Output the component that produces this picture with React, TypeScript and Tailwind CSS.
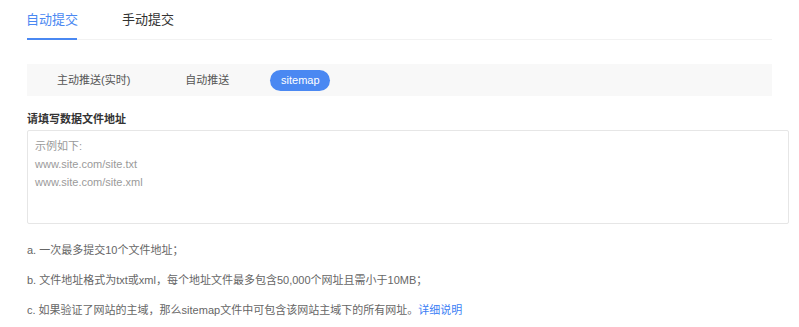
import { useState } from "react";

const FONT = "font-['Liberation_Sans','Noto_Sans_CJK_SC',sans-serif]";

const SUB_TABS = [
  { id: "push", label: "主动推送(实时)", gap: "ml-[30px]" },
  { id: "auto", label: "自动推送", gap: "ml-[55px]" },
  { id: "sitemap", label: "sitemap", gap: "ml-[41px]" },
];

export default function App() {
  const [tab, setTab] = useState("auto-submit");
  const [sub, setSub] = useState("sitemap");

  return (
    <div className={`h-[327px] w-[799px] overflow-hidden bg-white pl-[27px] ${FONT}`}>
      {/* top tabs */}
      <div className="flex h-[40px] w-[745px] items-stretch gap-[46px] border-b border-[#f2f2f2]">
        {[
          { id: "auto-submit", label: "自动提交" },
          { id: "manual-submit", label: "手动提交" },
        ].map((t) => (
          <button
            key={t.id}
            type="button"
            onClick={() => setTab(t.id)}
            className={`-mb-px flex w-[50px] items-start justify-center whitespace-nowrap border-b-2 pt-[11px] text-[13px] leading-[18px] ${
              tab === t.id ? "border-[#4a88f2] text-[#4a88f2]" : "border-transparent text-[#333]"
            }`}
          >
            {t.label}
          </button>
        ))}
      </div>

      {/* sub tabs */}
      <div className="mt-[24px] flex h-[32px] w-[745px] items-center bg-[#f8f8f8]">
        {SUB_TABS.map((s) =>
          s.id === sub ? (
            <button
              key={s.id}
              type="button"
              onClick={() => setSub(s.id)}
              className={`${s.gap} flex h-[21px] w-[60px] items-center justify-center rounded-full bg-[#4a88f2] text-[11px] text-white`}
            >
              {s.label}
            </button>
          ) : (
            <button
              key={s.id}
              type="button"
              onClick={() => setSub(s.id)}
              className={`${s.gap} text-[11px] text-[#555]`}
            >
              {s.label}
            </button>
          )
        )}
      </div>

      {/* form */}
      <div className="mt-[15px] text-[11px] font-bold leading-[16px] text-[#333]">请填写数据文件地址</div>
      <textarea
        className="mt-[3px] block h-[94px] w-[762px] resize-none rounded-[2px] border border-[#e6e6e6] px-[7px] py-[6px] text-[11px] leading-[18px] text-[#333] outline-none placeholder:text-[#9a9a9a]"
        placeholder={"示例如下:\nwww.site.com/site.txt\nwww.site.com/site.xml"}
      />

      {/* notes */}
      <div className="mt-[17px] flex flex-col gap-[12px] text-[11px] leading-[18px] text-[#666]">
        <p>a. 一次最多提交10个文件地址；</p>
        <p>b. 文件地址格式为txt或xml，每个地址文件最多包含50,000个网址且需小于10MB；</p>
        <p>
          c. 如果验证了网站的主域，那么sitemap文件中可包含该网站主域下的所有网址。
          <a href="#" className="text-[#3b7ef5]">
            详细说明
          </a>
        </p>
      </div>
    </div>
  );
}
